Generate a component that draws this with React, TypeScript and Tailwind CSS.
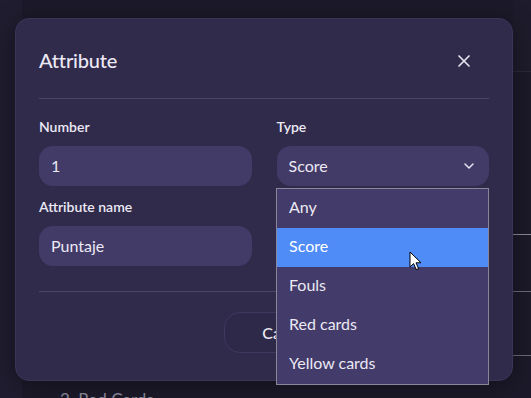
import { X, ChevronDown } from "lucide-react";

const OPTIONS = ["Any", "Score", "Fouls", "Red cards", "Yellow cards"];

function Cursor() {
  return (
    <svg
      className="pointer-events-none absolute left-[409px] top-[251px]"
      width="14"
      height="20"
      viewBox="0 0 14 20"
    >
      <path
        d="M1 1 L1 16 L4.6 12.6 L7.2 18.6 L9.6 17.6 L7 11.8 L12 11.8 Z"
        fill="#ffffff"
        stroke="#000000"
        strokeWidth="1"
        strokeLinejoin="round"
      />
    </svg>
  );
}

export default function App() {
  return (
    <div
      className="relative h-[398px] w-[531px] overflow-hidden bg-[#1c1a2a] text-[#ebe9f4]"
      style={{ fontFamily: "Lato, 'Noto Sans', sans-serif" }}
    >
      {/* Page behind the dialog */}
      <div className="flex h-full">
        <div className="w-[22px] bg-[#201d30]" />
        <div className="flex flex-1 flex-col">
          <div className="flex-1" />
          <div className="h-[6px] pl-[38px] text-[17px] leading-[20px] text-[#8f8c9e]">
            <span className="relative top-[-2px]">2. Red Cards</span>
          </div>
        </div>
        <div className="flex w-[18px] flex-col">
          <div className="h-[72px] border-b border-[#2b2839] bg-[#1e1c2c]" />
          <div className="h-[163px] border-b border-[#8d8a9b]" />
          <div className="h-[57px] border-b border-[#6c697a]" />
          <div className="h-[64px] border-b border-[#6c697a]" />
          <div className="flex-1" />
        </div>
      </div>

      {/* Dialog */}
      <div className="absolute left-[15px] top-[18px] flex h-[363px] w-[498px] flex-col rounded-[14px] border border-[#3a3457] bg-[#302a4b] px-[23px] shadow-[0_4px_24px_rgba(0,0,0,0.4)]">
        <div className="flex items-center justify-between pb-[23px] pt-[28px]">
          <h2 className="relative top-[-1px] text-[20px] leading-[28px] font-medium tracking-[-0.2px]">Attribute</h2>
          <button className="mr-[13px] flex h-6 w-6 items-center justify-center text-[#e6e4f0]">
            <X size={20} strokeWidth={2} />
          </button>
        </div>
        <div className="h-px bg-[#4a4468]" />

        <div className="grid grid-cols-2 gap-x-[25px] pt-[18px]">
          <div className="flex flex-col">
            <label className="mb-[9px] text-[14px] leading-5 font-semibold">Number</label>
            <div className="flex h-10 items-center rounded-[14px] bg-[#433b67] px-3 pb-[1px] text-[16px]">1</div>
          </div>
          <div className="flex flex-col">
            <label className="mb-[9px] text-[14px] leading-5 font-semibold">Type</label>
            <div className="flex h-10 items-center justify-between rounded-[14px] bg-[#433b67] px-3 text-[16px]">
              <span>Score</span>
              <ChevronDown size={16} strokeWidth={2.2} className="text-[#e6e4f0]" />
            </div>
          </div>
          <div className="mt-[11px] flex flex-col">
            <label className="mb-[9px] text-[14px] leading-5 font-semibold">Attribute name</label>
            <div className="flex h-10 items-center rounded-[14px] bg-[#433b67] px-3 text-[16px]">Puntaje</div>
          </div>
        </div>

        <div className="mt-[25px] h-px bg-[#4a4468]" />

        <div className="flex justify-end gap-3 pt-5">
          <button className="h-[41px] w-[124px] rounded-[16px] border border-[#3f3960] bg-[#2e2948] text-[16px] font-medium">
            Cancel
          </button>
          <button className="h-[41px] w-[129px] rounded-[16px] bg-[#4f8cf7] text-[16px] font-medium">
            Save
          </button>
        </div>
      </div>

      {/* Open select menu */}
      <ul className="absolute left-[276px] top-[188px] w-[213px] border border-[#8a8699] bg-[#433b69]">
        {OPTIONS.map((o) => (
          <li
            key={o}
            className={`flex h-[39px] items-center px-3 pb-[4px] text-[16px] ${
              o === "Score" ? "bg-[#4f8cf7] text-white" : ""
            }`}
          >
            {o}
          </li>
        ))}
      </ul>

      <Cursor />
    </div>
  );
}
